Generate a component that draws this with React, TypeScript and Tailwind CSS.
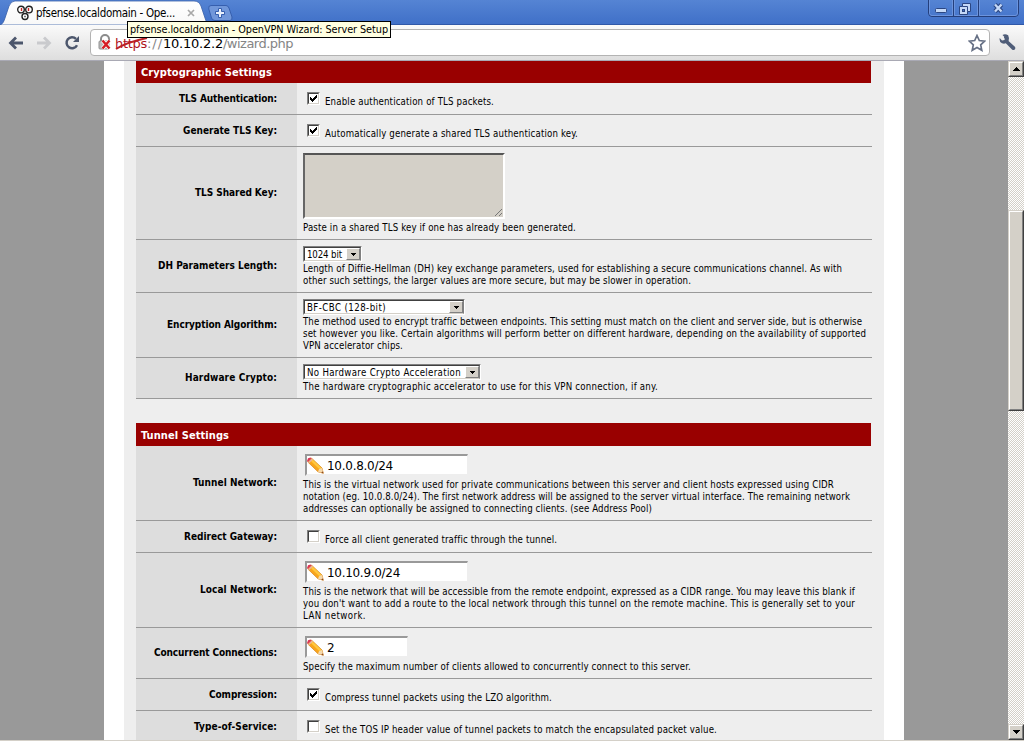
import React, { useLayoutEffect, useRef, useState } from "react";

/** One line of text whose letter spacing is adjusted so that it spans `w` pixels. */
function Fit({ w, className = "", children }: { w: number; className?: string; children: string }) {
  const ref = useRef<HTMLSpanElement>(null);
  const [spacing, setSpacing] = useState(0);
  useLayoutEffect(() => {
    if (ref.current) {
      const natural = ref.current.getBoundingClientRect().width;
      setSpacing((w - natural) / children.length);
    }
  }, [w, children]);
  return (
    <span ref={ref} className={`inline-block whitespace-pre ${className}`} style={{ letterSpacing: `${spacing}px` }}>
      {children}
    </span>
  );
}

type TextLine = [string, number];

function Lines({ lines }: { lines: TextLine[] }) {
  return (
    <div className="-mb-px flex flex-col items-start pt-px text-[9.6px] leading-[12px]">
      {lines.map(([text, w]) => (
        <Fit key={text} w={w}>{text}</Fit>
      ))}
    </div>
  );
}

function Row({ label, w, h, children }: { label: string; w: number; h: string; children: React.ReactNode }) {
  return (
    <div className={`flex w-[736px] shrink-0 border-b border-[#999] ${h}`}>
      <div className="flex w-[161px] shrink-0 items-center justify-end bg-[#ddd] pr-[20px] text-[10px] leading-[12px] font-bold">
        <Fit w={w}>{label}</Fit>
      </div>
      <div className="flex flex-1 flex-col justify-end pb-[6px] pl-[6px]">{children}</div>
    </div>
  );
}

function Section({ w, children }: { w: number; children: string }) {
  return (
    <div className="flex w-[735px] shrink-0 items-center bg-[#900] pt-[2px] pl-[5px] text-[11px] leading-[20px] font-bold text-white">
      <Fit w={w}>{children}</Fit>
    </div>
  );
}

function Check({ checked = false, w, children }: { checked?: boolean; w: number; children: string }) {
  return (
    <div className="flex items-start pl-[4px]">
      <span className="mr-[5px] mb-[3px] h-[13px] w-[13px] border border-t-[#808080] border-r-white border-b-white border-l-[#808080]">
        <span className="block h-[11px] w-[11px] border border-t-[#404040] border-r-[#d4d0c8] border-b-[#d4d0c8] border-l-[#404040] bg-white">
          {checked && (
            <svg width="9" height="9" shapeRendering="crispEdges">
              <path d="M1 3h1v1h1v1h1V4h1V3h1V2h1V1h1v3H7v1H6v1H5v1H4v1H3V7H2V6H1z" />
            </svg>
          )}
        </span>
      </span>
      <Fit w={w} className="mt-[4px] text-[9.6px] leading-[12px]">{children}</Fit>
    </div>
  );
}

function Select({ size, w, children }: { size: string; w: number; children: string }) {
  return (
    <div className={`flex h-[16px] border border-t-[#808080] border-r-white border-b-white border-l-[#808080] ${size}`}>
      <div className="flex flex-1 items-center justify-between border border-t-[#404040] border-r-[#808080] border-b-[#d4d0c8] border-l-[#404040] bg-white pl-[2px]">
        <Fit w={w} className="pt-px text-[9.6px] leading-[11px]">{children}</Fit>
        <span className="flex h-[12px] w-[14px] items-center justify-center border border-t-white border-r-[#808080] border-b-[#808080] border-l-white bg-[#d4d0c8]">
          <svg width="5" height="3" shapeRendering="crispEdges"><path d="M0 0h5v1H4v1H3v1H2V2H1V1H0z" /></svg>
        </span>
      </div>
    </div>
  );
}

function Pencil() {
  return (
    <svg width="17" height="17" viewBox="0 0 17 17" className="shrink-0">
      <path d="M4.6 1.2L15 11l1.3 5.2L11 14.8.8 5z" fill="#f9a51c" stroke="#d98a25" strokeWidth=".8" />
      <path d="M4.400 3L14 12.200" stroke="#ffc83e" strokeWidth="2.400" />
      <path d="M.8 5L4.6 1.2 3.5.5 1 1.2 0 4z" fill="#dd3555" />
      <path d="M1.6 5.8L5.4 2" stroke="#e9b0a5" strokeWidth="1.3" />
      <path d="M15 11l1.3 5.2L11 14.8l1-2.6z" fill="#f5d9ae" />
      <path d="M16.5 16.5l-2.4-.7 1.7-1.6z" fill="#8b4b22" />
    </svg>
  );
}

function Input({ size, w, children }: { size: string; w: number; children: string }) {
  return (
    <div className={`mb-[2px] ml-[2px] flex h-[22px] items-center border-t-2 border-r border-b-2 border-l-2 border-t-[#999] border-r-[#eee] border-b-[#eee] border-l-[#999] bg-white ${size}`}>
      <Pencil />
      <Fit w={w} className="ml-[3px] pt-px font-['DejaVu_Sans',sans-serif] text-[12px] leading-[16px]">{children}</Fit>
    </div>
  );
}

function ScrollButton({ down = false }: { down?: boolean }) {
  return (
    <div className="h-[16px] w-[16px] shrink-0 border border-t-[#d4d0c8] border-r-[#404040] border-b-[#404040] border-l-[#d4d0c8]">
      <div className="flex h-[14px] w-[14px] items-center justify-center border border-t-white border-r-[#808080] border-b-[#808080] border-l-white bg-[#d4d0c8]">
        <svg width="7" height="4" shapeRendering="crispEdges">
          <path d={down ? "M0 0h7v1H6v1H5v1H4v1H3V3H2V2H1V1H0z" : "M3 0h1v1h1v1h1v1h1v1H0V3h1V2h1V1h1z"} />
        </svg>
      </div>
    </div>
  );
}

function TabStrip() {
  return (
    <div className="flex h-[25px] shrink-0 justify-between border-b border-[#3058a8] bg-linear-to-b from-[#5584d4] to-[#4070c8]">
      <div className="flex">
        <div className="relative h-[25px] w-[208px]">
          <svg width="208" height="25" className="absolute inset-0">
            <defs>
              <linearGradient id="tab" x2="0" y2="1">
                <stop stopColor="#fff" />
                <stop offset="1" stopColor="#f8f8f8" />
              </linearGradient>
            </defs>
            <path d="M0 25C3 24 4 21 5 18L9 6Q11 1 15 1H194Q199 1 201 6L205 18Q207 24 208 25z" fill="url(#tab)" stroke="#385fa8" strokeWidth=".8" />
          </svg>
          <div className="relative flex h-[25px] items-center pl-[17px]">
            <svg width="16" height="16" viewBox="0 0 16 16" className="mr-[3px]" fill="#fff" stroke="#222" strokeWidth="1.4">
              <circle cx="8" cy="11.5" r="3" />
              <circle cx="4" cy="4.6" r="3.3" />
              <circle cx="12" cy="4.6" r="3.3" />
              <path d="M4.5 3v3M11.5 3v3" stroke="#c22" />
              <path d="M7 11.5h2" stroke="#777" />
            </svg>
            <Fit w={139} className="pt-px text-[11.5px] leading-[16px]">pfsense.localdomain - Ope...</Fit>
            <svg width="8" height="8" className="ml-[12px]" stroke="#a8a8a8" strokeWidth="1.7"><path d="M1 1l6 6M7 1L1 7" /></svg>
          </div>
        </div>
        <svg width="26" height="25">
          <path d="M3 5.5H18Q20 5.5 21 8L24 17Q24.500 20.500 22 20.500H7Q4.500 20.500 3.500 18L.8 9Q0 5.500 3 5.500z" fill="#7197da" stroke="#365fae" />
          <path d="M10.500 8.500h3v3h3v3h-3v3h-3v-3h-3v-3h3z" fill="#e9f0fb" stroke="#365fae" />
        </svg>
      </div>
      <svg width="94" height="17" className="mr-[3px]" fill="none">
        <path d="M1.500 0V13Q1.500 16.500 5 16.500H88Q91.500 16.500 91.500 13V0M26.500 0V16M51.500 0V16" stroke="#243f7c" />
        <path d="M2.500 0V13.500Q3 15.500 5 15.500H25.500V0M27.500 0V15.500H50.500V0M52.500 0V15.500H88Q90.500 15.500 90.500 13V0" stroke="#6c94dd" />
        <rect x="8.500" y="8.500" width="11" height="4" rx="1" fill="#c4d8f7" stroke="#2b4682" />
        <path d="M35.500 3.500h8v8h-3v3h-8v-8h3z" fill="#c4d8f7" stroke="#2b4682" />
        <path d="M35.500 6.500h5v5" stroke="#2b4682" />
        <rect x="35.500" y="9.500" width="2" height="2" fill="#4474c8" stroke="#2b4682" />
        <path d="M68 4.500l6.500 7M74.500 4.500l-6.500 7" stroke="#2b4682" strokeWidth="4.500" />
        <path d="M68 4.500l6.500 7M74.500 4.500l-6.500 7" stroke="#c4d8f7" strokeWidth="2.300" />
      </svg>
    </div>
  );
}

function Toolbar() {
  return (
    <div className="flex h-[36px] shrink-0 items-center border-b border-[#a9a9b4] bg-linear-to-b from-[#fafafa] to-[#dedede] pl-[8px]">
      <svg width="16" height="14" fill="none" stroke="#4c566c" strokeWidth="2.800"><path d="M8 1.500L2.500 7 8 12.500M3 7h12" /></svg>
      <svg width="16" height="14" className="ml-[12px]" fill="none" stroke="#c9cacd" strokeWidth="2.800"><path d="M8 1.500L13.500 7 8 12.500M13 7H1" /></svg>
      <svg width="16" height="16" className="ml-[12px]" fill="none" stroke="#4c566c" strokeWidth="2.500">
        <path d="M12 3.900A5.500 5.500 0 1 0 13 10.200" />
        <path d="M15 1v6H9z" fill="#4c566c" stroke="none" />
      </svg>
      <div className="ml-[10px] flex h-[27px] w-[900px] items-center rounded-[4px] border border-[#b3b3b3] bg-white pl-[6px]">
        <svg width="16" height="17" fill="none">
          <path d="M4 8V5a4 4 0 0 1 8 0v3" stroke="#8b8b8b" strokeWidth="2" />
          <rect x="2" y="7" width="10" height="8" rx="1" fill="#bbb" stroke="#929292" />
          <path d="M5.500 6.500l7 8M12.500 6.500l-7 8" stroke="#fff" strokeWidth="4" />
          <path d="M5.500 6.500l7 8M12.500 6.500l-7 8" stroke="#d51d24" strokeWidth="2.500" />
        </svg>
        <div className="ml-[2px] flex pt-[2px] font-['DejaVu_Sans',sans-serif] text-[13px] leading-[18px] text-[#858585]">
          <span className="relative text-[#b0141b]">
            <Fit w={32}>https</Fit>
            <svg width="34" height="16" className="absolute top-0 left-0" fill="none"><path d="M1 14C9 9 22 5 32 3" stroke="#bc2025" strokeWidth="2" /></svg>
          </span>
          <Fit w={16}>://</Fit>
          <Fit w={60} className="text-black">10.10.2.2</Fit>
          <Fit w={70}>/wizard.php</Fit>
        </div>
        <svg width="18" height="18" viewBox="0 0 18 18" className="mr-[3px] ml-auto">
          <path d="M9 1.500l2.300 5 5.400.6-4 3.700 1.100 5.500L9 13.600l-4.800 2.700 1.100-5.500-4-3.700 5.400-.6z" fill="#fff" stroke="#667085" strokeWidth="1.700" />
        </svg>
      </div>
      <svg width="17" height="17" viewBox="0 0 17 17" className="ml-[9px]" fill="#4f5d78">
        <path d="M5.500.5L5 4l2 1.800L10 5l-.8-3.800Q6-.5 3.500 1L6 3.500 5.500 6 3 6.500.7 4Q0 8 3 9.300q2 .8 3.800 0L13 15.500q1.500 1.200 2.700 0t.2-2.800L9.500 7q1-2.500-.2-5Q7.500.2 5.500.5z" />
      </svg>
    </div>
  );
}

export default function App() {
  return (
    <div className="relative flex h-[741px] w-[1024px] flex-col overflow-hidden bg-[#999] font-['DejaVu_Sans_Condensed','Noto_Sans',sans-serif] text-black">
      <TabStrip />
      <Toolbar />
      <div className="absolute top-[21px] left-[127px] z-10 flex h-[17px] w-[264px] items-center border border-black bg-[#ffffe1] pl-[2px]">
        <Fit w={258} className="pt-px text-[10.8px] leading-[14px]">pfsense.localdomain - OpenVPN Wizard: Server Setup</Fit>
      </div>
      <div className="flex h-[679px] justify-between overflow-hidden pl-[104px]">
        <div className="flex w-[800px] flex-col border-x-[20px] border-white bg-[#eee] pl-[12px]">
          <Section w={131}>Cryptographic Settings</Section>
          <Row label="TLS Authentication:" w={98} h="h-[32px]">
            <Check checked w={169}>Enable authentication of TLS packets.</Check>
          </Row>
          <Row label="Generate TLS Key:" w={94} h="h-[32px]">
            <Check checked w={253}>Automatically generate a shared TLS authentication key.</Check>
          </Row>
          <Row label="TLS Shared Key:" w={82} h="h-[93px]">
            <div className="mb-[2px] flex h-[66px] w-[202px] items-end justify-end border-2 border-t-[#555] border-r-white border-b-white border-l-[#666] bg-[#d4d0c8]">
              <svg width="9" height="9" fill="none" stroke="#777"><path d="M1 8l7-7M5 8l3-3" /></svg>
            </div>
            <Lines lines={[["Paste in a shared TLS key if one has already been generated.", 273]]} />
          </Row>
          <Row label="DH Parameters Length:" w={119} h="h-[53px]">
            <Select size="w-[59px]" w={35}>1024 bit</Select>
            <Lines lines={[
              ["Length of Diffie-Hellman (DH) key exchange parameters, used for establishing a secure communications channel. As with", 539],
              ["other such settings, the larger values are more secure, but may be slower in operation.", 388],
            ]} />
          </Row>
          <Row label="Encryption Algorithm:" w={110} h="h-[65px]">
            <Select size="w-[162px]" w={79}>BF-CBC (128-bit)</Select>
            <Lines lines={[
              ["The method used to encrypt traffic between endpoints. This setting must match on the client and server side, but is otherwise", 559],
              ["set however you like. Certain algorithms will perform better on different hardware, depending on the availability of supported", 563],
              ["VPN accelerator chips.", 100],
            ]} />
          </Row>
          <Row label="Hardware Crypto:" w={92} h="h-[41px]">
            <Select size="w-[178px]" w={154}>No Hardware Crypto Acceleration</Select>
            <Lines lines={[["The hardware cryptographic accelerator to use for this VPN connection, if any.", 355]]} />
          </Row>
          <div className="mt-[24px] flex w-[735px] bg-[#900] pt-px">
            <Section w={88}>Tunnel Settings</Section>
          </div>
          <Row label="Tunnel Network:" w={84} h="h-[75px]">
            <Input size="w-[163px]" w={66}>10.0.8.0/24</Input>
            <Lines lines={[
              ["This is the virtual network used for private communications between this server and client hosts expressed using CIDR", 531],
              ["notation (eg. 10.0.8.0/24). The first network address will be assigned to the server virtual interface. The remaining network", 547],
              ["addresses can optionally be assigned to connecting clients. (see Address Pool)", 349],
            ]} />
          </Row>
          <Row label="Redirect Gateway:" w={93} h="h-[32px]">
            <Check w={232}>Force all client generated traffic through the tunnel.</Check>
          </Row>
          <Row label="Local Network:" w={77} h="h-[75px]">
            <Input size="w-[163px]" w={73}>10.10.9.0/24</Input>
            <Lines lines={[
              ["This is the network that will be accessible from the remote endpoint, expressed as a CIDR range. You may leave this blank if", 552],
              ["you don't want to add a route to the local network through this tunnel on the remote machine. This is generally set to your", 552],
              ["LAN network.", 63],
            ]} />
          </Row>
          <Row label="Concurrent Connections:" w={123} h="h-[51px]">
            <Input size="w-[103px]" w={8}>2</Input>
            <Lines lines={[["Specify the maximum number of clients allowed to concurrently connect to this server.", 388]]} />
          </Row>
          <Row label="Compression:" w={68} h="h-[32px]">
            <Check checked w={227}>Compress tunnel packets using the LZO algorithm.</Check>
          </Row>
          <Row label="Type-of-Service:" w={83} h="h-[32px]">
            <Check w={392}>Set the TOS IP header value of tunnel packets to match the encapsulated packet value.</Check>
          </Row>
        </div>
        <div className="flex w-[16px] flex-col bg-[conic-gradient(#fff_25%,#d4d0c8_0_50%,#fff_0_75%,#d4d0c8_0)] bg-size-[2px_2px]">
          <ScrollButton />
          <div className="mt-[133px] h-[201px] border border-t-[#d4d0c8] border-r-[#404040] border-b-[#404040] border-l-[#d4d0c8]">
            <div className="h-full border border-t-white border-r-[#808080] border-b-[#808080] border-l-white bg-[#d4d0c8]" />
          </div>
          <div className="mt-auto"><ScrollButton down /></div>
        </div>
      </div>
      <div className="h-[1px] bg-[#d4d0c8]" />
    </div>
  );
}
